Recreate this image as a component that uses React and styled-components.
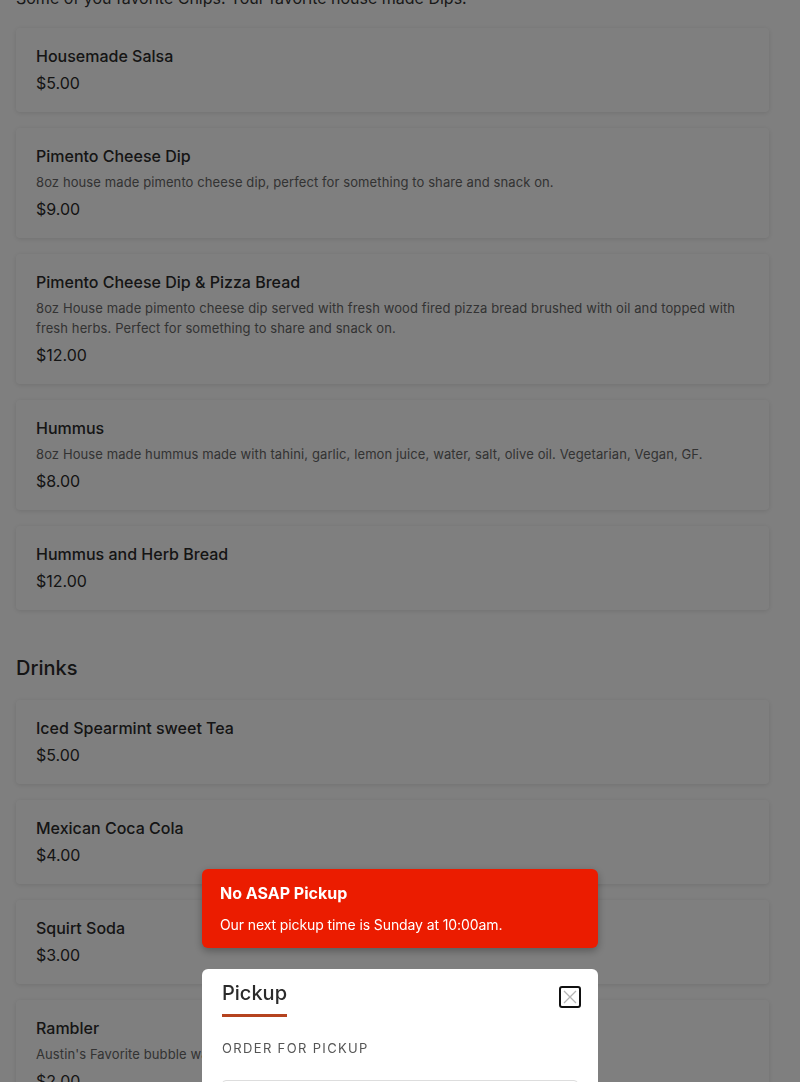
import { createGlobalStyle, styled } from 'styled-components';

const GlobalStyle = createGlobalStyle`
  html, body {
    margin: 0;
    padding: 0;
    background: #fff;
    font-family: 'Inter', 'Liberation Sans', sans-serif;
    color: #333;
    overflow: hidden;
  }
`;

const dips = [
  { name: 'Housemade Salsa', price: '$5.00' },
  {
    name: 'Pimento Cheese Dip',
    desc: '8oz house made pimento cheese dip, perfect for something to share and snack on.',
    price: '$9.00',
  },
  {
    name: 'Pimento Cheese Dip & Pizza Bread',
    desc: '8oz House made pimento cheese dip served with fresh wood fired pizza bread brushed with oil and topped with fresh herbs. Perfect for something to share and snack on.',
    price: '$12.00',
  },
  {
    name: 'Hummus',
    desc: '8oz House made hummus made with tahini, garlic, lemon juice, water, salt, olive oil. Vegetarian, Vegan, GF.',
    price: '$8.00',
  },
  { name: 'Hummus and Herb Bread', price: '$12.00' },
];

const drinks = [
  { name: 'Iced Spearmint sweet Tea', price: '$5.00' },
  { name: 'Mexican Coca Cola', price: '$4.00' },
  { name: 'Squirt Soda', price: '$3.00' },
  {
    name: 'Rambler',
    desc: "Austin's Favorite bubble water. Sparkling mineral water.",
    price: '$2.00',
  },
];

const ItemCard = ({ item }) => (
  <Card>
    <ItemName>{item.name}</ItemName>
    {item.desc && <ItemDesc>{item.desc}</ItemDesc>}
    <Price>{item.price}</Price>
  </Card>
);

const App = () => {
  return (
    <>
      <GlobalStyle />
      <Menu>
        <SectionIntro>Some of you favorite Chips! Your favorite house made Dips!</SectionIntro>
        <CardList>
          {dips.map((item) => (
            <ItemCard key={item.name} item={item} />
          ))}
        </CardList>
        <SectionTitle>Drinks</SectionTitle>
        <CardList>
          {drinks.map((item) => (
            <ItemCard key={item.name} item={item} />
          ))}
        </CardList>
      </Menu>

      <Overlay>
        <Toast>
          <ToastTitle>No ASAP Pickup</ToastTitle>
          <ToastText>Our next pickup time is Sunday at 10:00am.</ToastText>
        </Toast>
        <Modal>
          <ModalHeader>
            <Tab>Pickup</Tab>
            <CloseButton aria-label='Close'>
              <svg width='14' height='14' viewBox='0 0 14 14'>
                <path d='M1 1L13 13M13 1L1 13' stroke='#b5b5b5' strokeWidth='1.3' />
              </svg>
            </CloseButton>
          </ModalHeader>
          <FieldLabel>Order for pickup</FieldLabel>
          <FieldBox />
        </Modal>
      </Overlay>
    </>
  );
};

export default App;

const Menu = styled.div`
  width: 753px;
  padding-left: 16px;
  margin-top: -12px;
`;

const SectionIntro = styled.p`
  margin: 0 0 20px;
  font-size: 16px;
  line-height: 20px;
  color: #333;
`;

const CardList = styled.div`
  display: flex;
  flex-direction: column;
  gap: 16px;
`;

const Card = styled.div`
  background: #fff;
  border-radius: 4px;
  box-shadow: 0 1px 5px rgba(0, 0, 0, 0.12);
  padding: 18px 20px 19px;
  display: flex;
  flex-direction: column;
`;

const ItemName = styled.div`
  font-size: 16px;
  line-height: 20px;
  font-weight: 500;
  color: #2b2b2b;
`;

const ItemDesc = styled.div`
  margin-top: 6px;
  font-size: 13px;
  line-height: 20px;
  color: #666;
  letter-spacing: 0.1px;
`;

const Price = styled.div`
  margin-top: 7px;
  font-size: 16px;
  line-height: 20px;
  color: #2b2b2b;
`;

const SectionTitle = styled.h2`
  margin: 46px 0 20px;
  font-size: 20px;
  line-height: 24px;
  font-weight: 500;
  color: #2b2b2b;
`;

const Overlay = styled.div`
  position: fixed;
  inset: 0;
  background: rgba(0, 0, 0, 0.5);
  display: flex;
  flex-direction: column;
  align-items: center;
  gap: 21px;
  padding-top: 869px;
  box-sizing: border-box;
`;

const Toast = styled.div`
  width: 396px;
  box-sizing: border-box;
  background: #eb1c00;
  border-radius: 6px;
  box-shadow: 0 3px 8px rgba(0, 0, 0, 0.3);
  padding: 14px 18px 13px;
  color: #fff;
`;

const ToastTitle = styled.div`
  font-size: 16px;
  line-height: 20px;
  font-weight: 700;
`;

const ToastText = styled.div`
  margin-top: 12px;
  font-size: 14px;
  line-height: 20px;
  letter-spacing: -0.1px;
`;

const Modal = styled.div`
  width: 396px;
  box-sizing: border-box;
  background: #fff;
  border-radius: 6px 6px 0 0;
  padding: 10px 17px 20px 20px;
  flex: 1;
`;

const ModalHeader = styled.div`
  display: flex;
  justify-content: space-between;
  align-items: flex-start;
`;

const Tab = styled.div`
  font-size: 20px;
  line-height: 28px;
  font-weight: 500;
  color: #2b2b2b;
  padding-bottom: 7px;
  border-bottom: 3px solid #b5431f;
`;

const CloseButton = styled.button`
  margin-top: 7px;
  width: 22px;
  height: 22px;
  padding: 0;
  display: flex;
  align-items: center;
  justify-content: center;
  background: #fff;
  border: 2px solid #111;
  border-radius: 3px;
  cursor: pointer;
`;

const FieldLabel = styled.div`
  margin-top: 22px;
  font-size: 13px;
  line-height: 18px;
  text-transform: uppercase;
  letter-spacing: 1.35px;
  color: #555;
`;

const FieldBox = styled.div`
  margin-top: 23px;
  margin-right: 3px;
  height: 48px;
  border: 1px solid #ddd;
  border-radius: 4px;
`;
